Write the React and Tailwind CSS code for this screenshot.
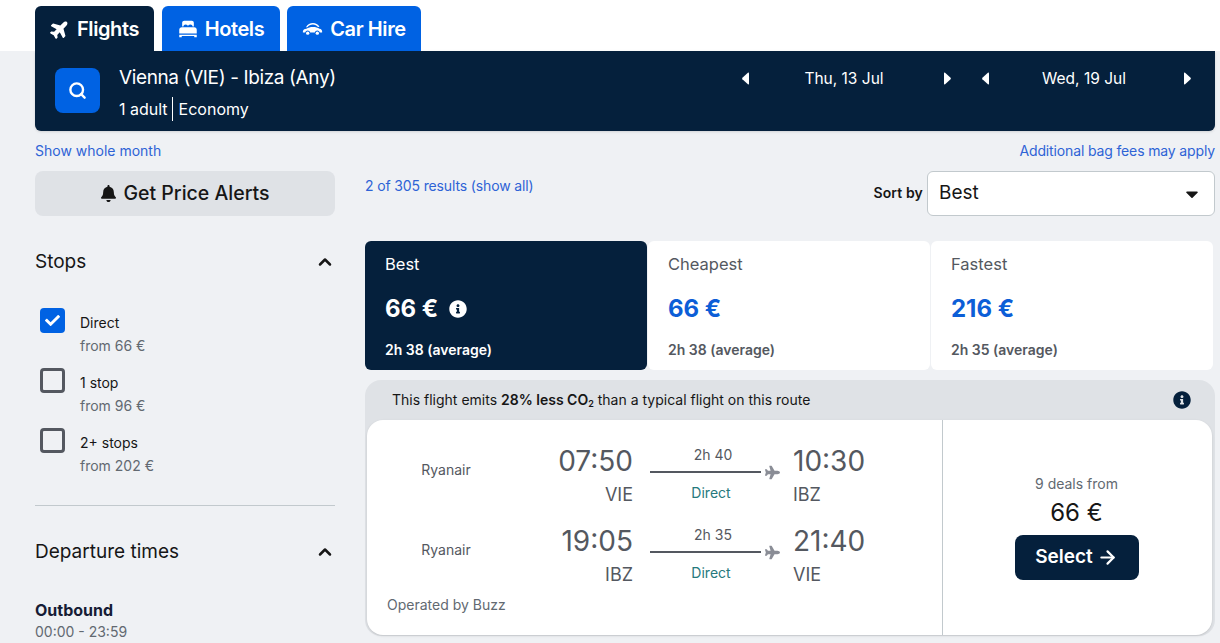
import { ArrowRight, ChevronUp, Search } from "lucide-react";
import { FaBell, FaCaretDown, FaCheck, FaInfoCircle, FaPlane } from "react-icons/fa";

const font = { fontFamily: "Inter, 'Noto Sans', sans-serif" };

function BedIcon() {
  return (
    <svg viewBox="0 0 24 24" className="h-[20px] w-[20px]" fill="currentColor">
      <path d="M5 4.5C5 3.1 6.100 2 7.500 2h9C17.900 2 19 3.100 19 4.500V9h-1.500c0-1.600-1.200-2.500-2.700-2.500S12 7.500 12 9c0-1.500-1.300-2.500-2.800-2.500S6.500 7.400 6.500 9H5z" />
      <path d="M1.500 13c0-1.700 1.300-3 3-3h15c1.700 0 3 1.300 3 3v4.500h-21zM1.500 19h21v3h-3v-1.500h-15V22h-3z" />
    </svg>
  );
}

function CarIcon() {
  return (
    <svg viewBox="0 0 24 24" className="h-[21px] w-[21px]" fill="currentColor">
      <path d="M4.500 10.500C6.500 7.300 9.200 5.800 12.500 5.800c3.200 0 5.600 1.400 7.500 4.200l-1.700.4c-1.500-2-3.400-3-5.800-3-2.600 0-4.700 1-6.400 3.300z" />
      <path d="M1 15.500c0-2 1.800-3 4-3.200 2.200-1.300 4.600-1.900 7.500-1.900 3 0 5.600.7 7.500 1.900 2 .3 3 1.400 3 3.200v1h-2.600a3 3 0 0 0-5.800 0H9.400a3 3 0 0 0-5.800 0H1z" />
      <circle cx="6.500" cy="17.300" r="1.900" />
      <circle cx="17.500" cy="17.300" r="1.900" />
    </svg>
  );
}

function Caret({ right }) {
  return (
    <svg viewBox="0 0 8 12" className="mt-[5px] h-[13px] w-[8px]" fill="currentColor">
      <path d={right ? "M1 .8c0-.6.6-.9 1.100-.5L7.600 5.300c.4.400.4 1 0 1.400L2.100 11.700c-.5.400-1.100.1-1.100-.5z" : "M7 .8c0-.6-.6-.9-1.100-.5L.4 5.300c-.4.400-.4 1 0 1.400l5.500 5c.5.400 1.100.1 1.100-.5z"} />
    </svg>
  );
}

function Tab({ icon, label, active, width }) {
  return (
    <div className={`flex h-[45px] items-center justify-center gap-[7px] rounded-t-md text-[20px] font-semibold tracking-[-0.02em] text-white ${width} ${active ? "bg-[#05203c]" : "bg-[#0062e3]"}`}>
      {icon}
      <span>{label}</span>
    </div>
  );
}

function DatePicker({ label }) {
  return (
    <div className="flex w-[209px] items-start justify-between text-white">
      <Caret />
      <span className="pr-[5px] text-[15.5px] leading-[24px]">{label}</span>
      <Caret right />
    </div>
  );
}

function StopOption({ label, price, checked }) {
  return (
    <div className="flex h-[60px] pl-[5px]">
      <div className={`flex h-[25px] w-[25px] items-center justify-center rounded-[4px] ${checked ? "bg-[#0062e3]" : "border-[3px] border-[#545860]"}`}>
        {checked && <FaCheck className="text-[15px] text-white" />}
      </div>
      <div className="ml-[15px] pt-[5px] text-[14px] leading-[20px]">
        <div className="text-[#161616]">{label}</div>
        <div className="mt-[3px] text-[#626971]">{price}</div>
      </div>
    </div>
  );
}

function FilterHeading({ label }) {
  return (
    <div className="flex items-center justify-between text-[19px] leading-[24px] text-[#161616]">
      <span>{label}</span>
      <ChevronUp size={20} strokeWidth={3} className="text-[#161616]" />
    </div>
  );
}

function SortTab({ title, price, time, active, info }) {
  return (
    <div className={`h-[129px] w-[282px] rounded-md pl-[20px] pt-[11px] ${active ? "bg-[#05203c] text-white" : "bg-white text-[#545860]"}`}>
      <div className="text-[16.5px] leading-[24px]">{title}</div>
      <div className="mt-[17px] flex items-center gap-[11px] leading-[32px]">
        <span className={`text-[24px] font-bold ${active ? "text-white" : "text-[#0c5ed7]"}`}>{price}</span>
        {info && <FaInfoCircle className="text-[18px] text-white" />}
      </div>
      <div className="mt-[15px] text-[14px] font-semibold leading-[20px]">{time}</div>
    </div>
  );
}

function Leg({ from, to, dep, arr, duration }) {
  return (
    <div className="flex h-[80px] text-[#545860]">
      <div className="w-[158px] pt-[19px] text-center text-[14px] leading-[20px]">Ryanair</div>
      <div className="w-[108px] text-right">
        <div className="text-[28px] leading-[40px]">{dep}</div>
        <div className="mt-[1px] text-[18px] leading-[26px]">{from}</div>
      </div>
      <div className="ml-[17px] w-[132px]">
        <div className="mt-[5px] w-[126px] text-center text-[14px] leading-[18px]">{duration}</div>
        <div className="flex h-[16px] items-center">
          <div className="h-[2px] w-[111px] bg-[#545860]" />
          <FaPlane className="ml-[4px] text-[15px] text-[#8a8d96]" />
        </div>
        <div className="mt-[3px] w-[122px] text-center text-[14px] leading-[20px] text-[#26797d]">Direct</div>
      </div>
      <div className="ml-[11px]">
        <div className="text-[28px] leading-[40px]">{arr}</div>
        <div className="mt-[1px] text-[18px] leading-[26px]">{to}</div>
      </div>
    </div>
  );
}

export default function App() {
  return (
    <div className="h-[643px] w-[1220px] overflow-hidden bg-[#eff1f4]" style={font}>
      <div className="flex h-[51px] bg-white pl-[35px] pt-[6px]">
        <Tab active width="w-[119px]" label="Flights" icon={<FaPlane className="-rotate-45 text-[20px]" />} />
        <div className="w-[8px]" />
        <Tab width="w-[118px]" label="Hotels" icon={<BedIcon />} />
        <div className="w-[7px]" />
        <Tab width="w-[134px]" label="Car Hire" icon={<CarIcon />} />
      </div>

      <div className="mx-[35px] flex h-[80px] w-[1180px] justify-between rounded-b-md bg-[#05203c] pl-[20px] pr-[24px] shadow-sm">
        <div className="flex items-center gap-[19px]">
          <div className="-mt-[1px] flex h-[45px] w-[45px] items-center justify-center rounded-lg bg-[#0062e3] text-white">
            <Search size={19} strokeWidth={3} />
          </div>
          <div className="pt-[3px] text-white">
            <div className="text-[19px] leading-[26px] tracking-[-0.02em]">Vienna (VIE) - Ibiza (Any)</div>
            <div className="mt-[6px] flex items-center text-[16px] leading-[24px]">
              <span className="border-r border-white pr-[4px]">1 adult</span>
              <span className="pl-[6px]">Economy</span>
            </div>
          </div>
        </div>
        <div className="flex gap-[31px] pt-[16px]">
          <DatePicker label="Thu, 13 Jul" />
          <DatePicker label="Wed, 19 Jul" />
        </div>
      </div>

      <div className="mx-[35px] mt-[10px] flex w-[1180px] justify-between text-[14px] leading-[20px] text-[#2e63d6]">
        <span>Show whole month</span>
        <span className="tracking-[-0.01em]">Additional bag fees may apply</span>
      </div>

      <div className="mx-[35px] mt-[10px] flex w-[1180px] gap-[30px]">
        <aside className="w-[300px] shrink-0">
          <div className="flex h-[45px] items-center justify-center gap-[6px] rounded-lg bg-[#dfe2e6] text-[19.5px] font-medium text-[#161616]">
            <FaBell className="text-[17px]" />
            <span>Get Price Alerts</span>
          </div>
          <div className="mt-[34px]">
            <FilterHeading label="Stops" />
          </div>
          <div className="mt-[34px]">
            <StopOption checked label="Direct" price="from 66 €" />
            <StopOption label="1 stop" price="from 96 €" />
            <StopOption label="2+ stops" price="from 202 €" />
          </div>
          <div className="mt-[17px] h-px bg-[#c2c9cd]" />
          <div className="mt-[34px]">
            <FilterHeading label="Departure times" />
          </div>
          <div className="mt-[34px] text-[16px] font-bold leading-[24px] text-[#161c35]">Outbound</div>
          <div className="text-[14px] leading-[20px] text-[#626971]">00:00 - 23:59</div>
        </aside>

        <main className="w-[850px]">
          <div className="flex h-[45px] items-start justify-between">
            <span className="mt-[5px] text-[14px] leading-[20px] tracking-[-0.01em] text-[#2e63d6]">2 of 305 results (show all)</span>
            <div className="flex items-center gap-[4px]">
              <span className="-mt-[2px] text-[14px] font-semibold tracking-[0.01em] text-[#161616]">Sort by</span>
              <div className="flex h-[45px] w-[288px] items-center justify-between rounded-md border border-[#c2c9cd] bg-white pl-[11px] pr-[12px] text-[19px] text-[#161616]">
                <span>Best</span>
                <FaCaretDown className="text-[20px]" />
              </div>
            </div>
          </div>

          <div className="mt-[25px] flex gap-px">
            <SortTab active info title="Best" price="66 €" time="2h 38 (average)" />
            <SortTab title="Cheapest" price="66 €" time="2h 38 (average)" />
            <SortTab title="Fastest" price="216 €" time="2h 35 (average)" />
          </div>

          <div className="mt-[10px] h-[256px] rounded-2xl bg-[#dfe2e6] pl-[2px] pr-[3px]">
            <div className="flex h-[40px] items-center justify-between pb-[1px] pl-[25px] pr-[21px] text-[14px] text-[#161616]">
              <span>
                This flight emits <b className="font-semibold">28% less CO<sub className="text-[9px]">2</sub></b> than a typical flight on this route
              </span>
              <FaInfoCircle className="text-[18px] text-[#05203c]" />
            </div>
            <div className="flex h-[215px] rounded-2xl bg-white shadow">
              <div className="w-[576px] border-r border-[#c2c9cd] pt-[21px]">
                <Leg dep="07:50" arr="10:30" from="VIE" to="IBZ" duration="2h 40" />
                <Leg dep="19:05" arr="21:40" from="IBZ" to="VIE" duration="2h 35" />
                <div className="-mt-[6px] pl-[20px] text-[14px] leading-[20px] text-[#626971]">Operated by Buzz</div>
              </div>
              <div className="flex flex-1 flex-col items-center pr-[2px] pt-[54px]">
                <div className="text-[14px] leading-[20px] text-[#626971]">9 deals from</div>
                <div className="mt-[3px] text-[24px] leading-[32px] text-[#161616]">66 €</div>
                <div className="mt-[6px] flex h-[45px] w-[124px] items-center justify-center gap-[4px] rounded-lg bg-[#05203c] text-[19px] font-semibold text-white">
                  <span>Select</span>
                  <ArrowRight size={21} strokeWidth={2.5} />
                </div>
              </div>
            </div>
          </div>
        </main>
      </div>
    </div>
  );
}
